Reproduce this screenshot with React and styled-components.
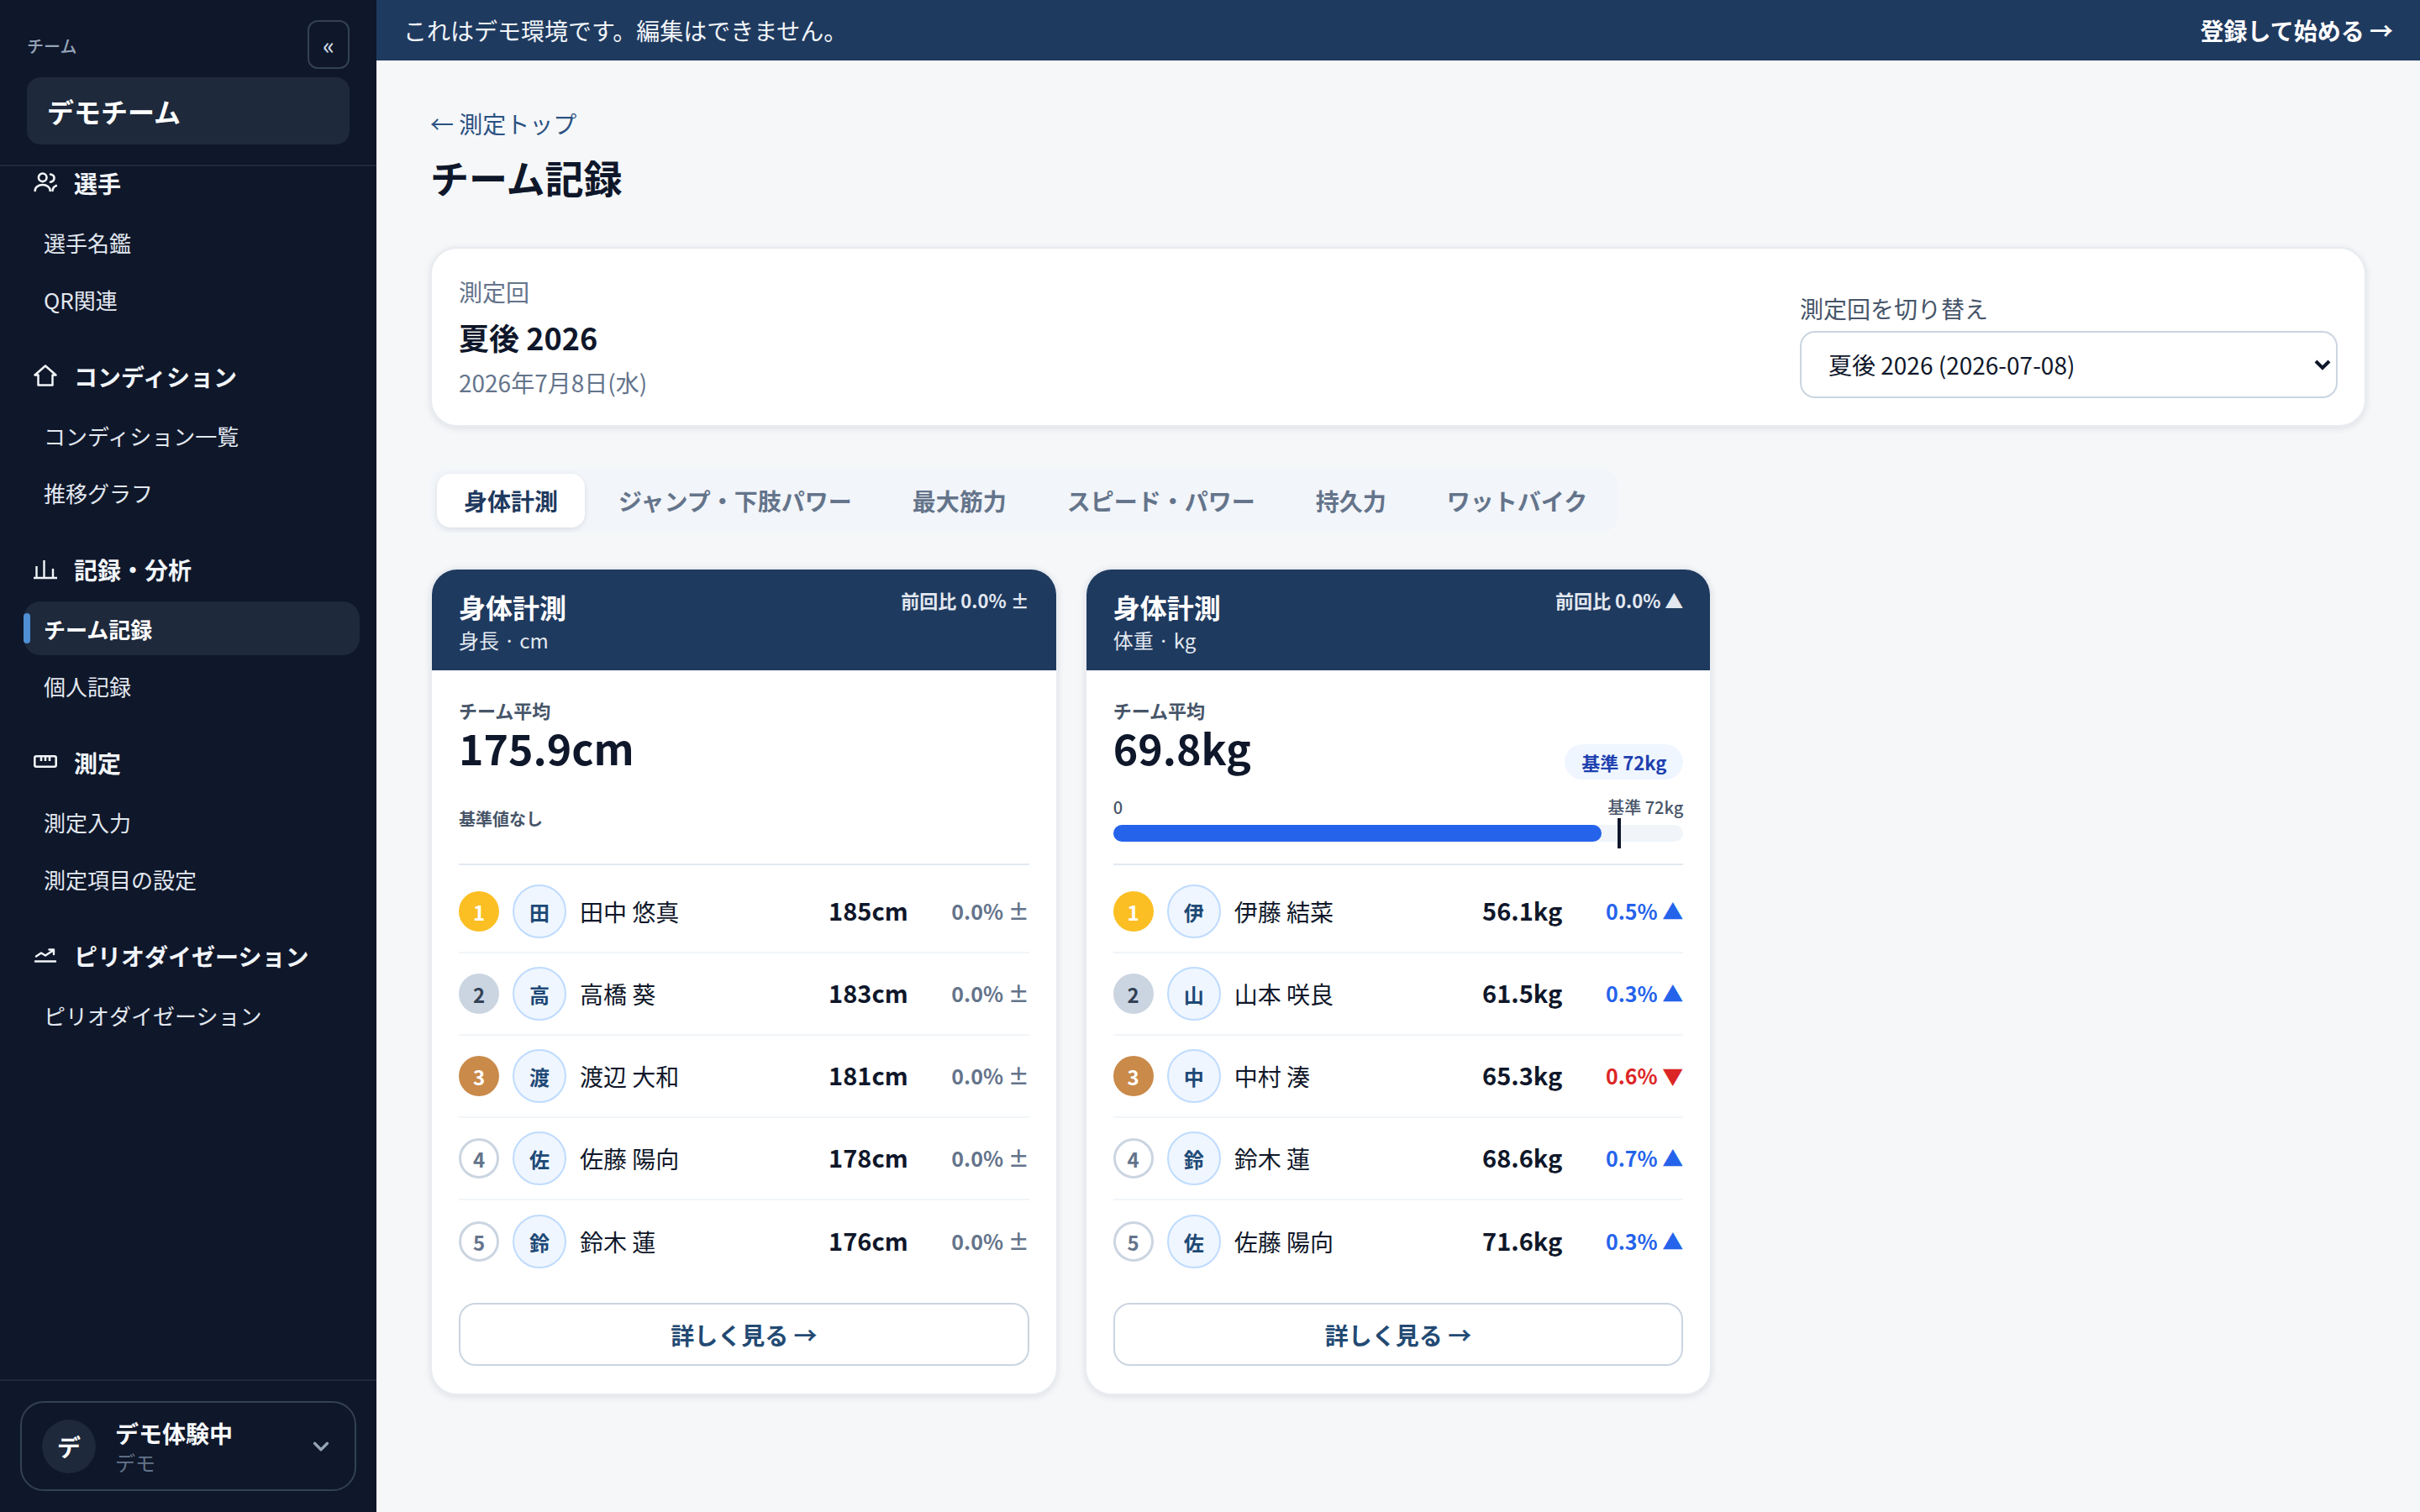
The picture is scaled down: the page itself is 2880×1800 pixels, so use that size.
import React from "react";
import styled, { createGlobalStyle } from "styled-components";
import { ChevronDown } from "lucide-react";

const GlobalStyle = createGlobalStyle`
  html, body { margin: 0; padding: 0; }
  body {
    background: #f5f7f9;
    color: #0f172a;
    font-family: "Noto Sans CJK JP", "Noto Sans", sans-serif;
  }
  * { box-sizing: border-box; }
`;

const Page = styled.div`
  display: flex;
  min-height: 1800px;
`;

const Sidebar = styled.aside`
  width: 448px;
  flex: none;
  display: flex;
  flex-direction: column;
  background: #0f172a;
`;

const SideTop = styled.div`
  padding: 24px 32px 24px;
  border-bottom: 2px solid #1e293b;
`;

const SideTopRow = styled.div`
  display: flex;
  justify-content: space-between;
  align-items: center;
  height: 58px;
  margin-bottom: 10px;
`;

const SideLabel = styled.span`
  font-size: 20px;
  font-weight: 500;
  color: #94a3b8;
  margin-top: 3px;
`;

const CollapseButton = styled.button`
  width: 50px;
  height: 58px;
  padding: 0;
  background: transparent;
  border: 2px solid #334155;
  border-radius: 12px;
  color: #cbd5e1;
  font: 500 28px "Noto Sans CJK JP", sans-serif;
`;

const TeamBox = styled.div`
  height: 80px;
  display: flex;
  align-items: center;
  padding: 0 24px;
  background: #1e293b;
  border-radius: 16px;
  color: #fff;
  font-size: 32px;
  font-weight: 700;
`;

const Nav = styled.nav`
  flex: 1;
  display: flex;
  flex-direction: column;
  gap: 40px;
  padding: 0 20px 0 28px;
`;

const NavGroup = styled.div`
  display: flex;
  flex-direction: column;
  gap: 4px;
`;

const NavHeading = styled.div`
  height: 40px;
  margin-bottom: 14px;
  padding-left: 12px;
  display: flex;
  align-items: center;
  gap: 20px;
  color: #f1f5f9;
  font-size: 28px;
  font-weight: 700;
`;

const NavItem = styled.div`
  position: relative;
  height: 64px;
  display: flex;
  align-items: center;
  padding-left: 24px;
  border-radius: 20px;
  font-size: 26px;
  font-weight: ${(p) => (p.$active ? 700 : 400)};
  color: ${(p) => (p.$active ? "#fff" : "#e2e8f0")};
  background: ${(p) => (p.$active ? "#1e293b" : "transparent")};
`;

const ActiveMark = styled.span`
  position: absolute;
  left: 0;
  top: 14px;
  bottom: 14px;
  width: 8px;
  border-radius: 4px;
  background: #4f8fd6;
`;

const SideFoot = styled.div`
  padding: 24px 24px 25px;
  border-top: 2px solid #1e293b;
`;

const AccountCard = styled.div`
  height: 107px;
  display: flex;
  align-items: center;
  padding: 0 25px 0 24px;
  border: 2px solid #334155;
  border-radius: 28px;
  gap: 23px;
`;

const AccountAvatar = styled.div`
  width: 64px;
  height: 64px;
  flex: none;
  border-radius: 50%;
  display: flex;
  align-items: center;
  justify-content: center;
  background: #1e293b;
  color: #fff;
  font-size: 28px;
  font-weight: 700;
`;

const AccountText = styled.div`
  flex: 1;
  display: flex;
  flex-direction: column;
`;

const AccountName = styled.span`
  color: #f8fafc;
  font-size: 28px;
  font-weight: 700;
  line-height: 37px;
`;

const AccountRole = styled.span`
  color: #64748b;
  font-size: 24px;
  line-height: 31px;
`;

const Column = styled.div`
  flex: 1;
  min-width: 0;
  display: flex;
  flex-direction: column;
`;

const TopBar = styled.div`
  height: 72px;
  display: flex;
  align-items: center;
  justify-content: space-between;
  padding: 0 32px;
  background: #1f3a5f;
  color: #f1f5f9;
  font-size: 28px;
`;

const TopLink = styled.span`
  color: #fff;
  font-weight: 600;
`;

const Main = styled.main`
  padding: 56px 64px;
`;

const BackLink = styled.div`
  font-size: 28px;
  line-height: 38px;
  color: #2c5282;
`;

const Title = styled.h1`
  margin: 13px 0 0;
  font-size: 46px;
  line-height: 62px;
  font-weight: 700;
  color: #0f172a;
`;

const SessionCard = styled.section`
  margin-top: 53px;
  height: 214px;
  display: flex;
  align-items: center;
  justify-content: space-between;
  padding: 0 32px;
  background: #fff;
  border: 2px solid #e8ecf1;
  border-radius: 32px;
  box-shadow: 0 2px 8px rgba(15, 23, 42, 0.1);
`;

const SessionInfo = styled.div`
  display: flex;
  flex-direction: column;
`;

const MutedLine = styled.span`
  font-size: 28px;
  line-height: 44px;
  color: #64748b;
`;

const SessionName = styled.span`
  font-size: 36px;
  line-height: 64px;
  font-weight: 700;
  color: #0f172a;
`;

const SelectArea = styled.div`
  width: 640px;
  margin-top: 20px;
  display: flex;
  flex-direction: column;
  gap: 8px;
`;

const SelectLabel = styled.label`
  font-size: 28px;
  line-height: 38px;
  color: #475569;
`;

const SelectWrap = styled.div`
  position: relative;
`;

const Select = styled.select`
  appearance: none;
  width: 100%;
  height: 80px;
  padding: 0 32px;
  background: #fff;
  border: 2px solid #cbd5e1;
  border-radius: 18px;
  color: #0f172a;
  font: 400 28px "Noto Sans CJK JP", sans-serif;
`;

const SelectArrow = styled.svg`
  position: absolute;
  right: 8px;
  top: 33px;
  width: 20px;
  height: 14px;
`;

const Tabs = styled.div`
  display: inline-flex;
  align-self: flex-start;
  gap: 8px;
  margin-top: 50px;
  padding: 6px 4px 6px 8px;
  background: #f2f5f9;
  border-radius: 20px;
`;

const Tab = styled.div`
  height: 64px;
  display: flex;
  align-items: center;
  padding: 0 32px;
  border-radius: 16px;
  font-size: 28px;
  font-weight: ${(p) => (p.$active ? 700 : 600)};
  color: ${(p) => (p.$active ? "#1f3a5f" : "#64748b")};
  background: ${(p) => (p.$active ? "#fff" : "transparent")};
  box-shadow: ${(p) => (p.$active ? "0 2px 6px rgba(15, 23, 42, 0.1)" : "none")};
`;

const CardGrid = styled.div`
  display: grid;
  grid-template-columns: repeat(3, 1fr);
  gap: 32px;
  margin-top: 42px;
`;

const Card = styled.article`
  background: #fff;
  border: 2px solid #e8ecf1;
  border-radius: 32px;
  overflow: hidden;
  box-shadow: 0 2px 8px rgba(15, 23, 42, 0.1);
`;

const CardHead = styled.header`
  height: 120px;
  display: flex;
  justify-content: space-between;
  padding: 22px 32px 0;
  background: #1f3a5f;
  color: #fff;
`;

const CardTitle = styled.div`
  font-size: 32px;
  line-height: 44px;
  font-weight: 700;
`;

const CardSub = styled.div`
  font-size: 24px;
  line-height: 36px;
  color: #e2e8f0;
`;

const HeadDelta = styled.div`
  margin-top: -2px;
  font-size: 22px;
  font-weight: 600;
  line-height: 32px;
  color: #e2e8f0;
`;

const CardBody = styled.div`
  padding: 30px 32px 33px;
`;

const Summary = styled.div`
  height: 202px;
  border-bottom: 2px solid #e2e8f0;
`;

const AvgLabel = styled.div`
  font-size: 22px;
  font-weight: 600;
  line-height: 34px;
  color: #475569;
`;

const AvgRow = styled.div`
  display: flex;
  justify-content: space-between;
  align-items: flex-end;
  height: 60px;
`;

const AvgValue = styled.div`
  margin-bottom: 6px;
  font-size: 50px;
  line-height: 54px;
  font-weight: 700;
  color: #0f172a;
`;

const Pill = styled.span`
  height: 42px;
  display: inline-flex;
  align-items: center;
  padding: 0 20px;
  margin-bottom: -6px;
  border-radius: 21px;
  background: #eff6ff;
  color: #1e40af;
  font-size: 22px;
  font-weight: 600;
`;

const NoBaseline = styled.div`
  margin-top: 38px;
  font-size: 20px;
  font-weight: 600;
  line-height: 30px;
  color: #475569;
`;

const BarLabels = styled.div`
  display: flex;
  justify-content: space-between;
  margin-top: 24px;
  font-size: 20px;
  font-weight: 500;
  line-height: 30px;
  color: #475569;
`;

const BarTrack = styled.div`
  position: relative;
  height: 20px;
  margin-top: 6px;
  border-radius: 10px;
  background: #f1f5f9;
`;

const BarFill = styled.div`
  height: 100%;
  border-radius: 10px;
  background: #2563eb;
`;

const BarMarker = styled.span`
  position: absolute;
  top: -8px;
  bottom: -8px;
  width: 4px;
  background: #0f172a;
`;

const Rows = styled.div`
  margin-top: 7px;
`;

const Row = styled.div`
  height: 98px;
  display: flex;
  align-items: center;
  border-bottom: ${(p) => (p.$last ? "none" : "2px solid #f1f5f9")};
`;

const rankStyles = {
  1: "background:#fbbf24;color:#fff;",
  2: "background:#cbd5e1;color:#334155;",
  3: "background:#c98a4a;color:#fff;",
  4: "background:#fff;color:#64748b;border:3px solid #cbd5e1;",
  5: "background:#fff;color:#64748b;border:3px solid #cbd5e1;",
};

const Rank = styled.span`
  width: 48px;
  height: 48px;
  flex: none;
  display: flex;
  align-items: center;
  justify-content: center;
  border-radius: 50%;
  font-size: 24px;
  font-weight: 600;
  ${(p) => rankStyles[p.$rank]}
`;

const Avatar = styled.span`
  width: 64px;
  height: 64px;
  flex: none;
  margin-left: 16px;
  display: flex;
  align-items: center;
  justify-content: center;
  border-radius: 50%;
  background: #eff6ff;
  border: 2px solid #bfdbfe;
  color: #1e4976;
  font-size: 24px;
  font-weight: 700;
`;

const Name = styled.span`
  flex: 1;
  margin-left: 16px;
  font-size: 28px;
  color: #0f172a;
`;

const Value = styled.span`
  font-size: 29px;
  font-weight: 700;
  color: #0f172a;
  margin-top: -4px;
`;

const deltaColors = { flat: "#64748b", up: "#2563eb", down: "#dc2626" };

const Delta = styled.span`
  width: 144px;
  margin-top: -2px;
  text-align: right;
  font-size: 25px;
  font-weight: 600;
  color: ${(p) => deltaColors[p.$dir]};
`;

const DetailButton = styled.button`
  display: block;
  width: 100%;
  height: 75px;
  margin-top: 24px;
  background: #fff;
  border: 2px solid #cbd5e1;
  border-radius: 20px;
  color: #234a73;
  font: 600 28px "Noto Sans CJK JP", sans-serif;
`;

const PlayersIcon = () => (
  <svg width="28" height="28" viewBox="0 0 28 28" fill="none" stroke="currentColor" strokeWidth="2.6" strokeLinecap="round">
    <circle cx="10.7" cy="7.3" r="4.8" />
    <path d="M1.7 23c0-4 4-7 9-7s9 3 9 7" />
    <path d="M20 3.5c3 .5 4.5 2.5 4.5 4.5s-1.5 4.2-4.5 4.7" />
    <path d="M22.5 23c.2-2.6 1.800-5 4.500-6" />
  </svg>
);

const HouseIcon = () => (
  <svg width="28" height="28" viewBox="0 0 28 28" fill="none" stroke="currentColor" strokeWidth="2.5" strokeLinejoin="round">
    <path d="M14 1.500 1.500 12.500h4v12h17v-12h4Z" />
  </svg>
);

const BarsIcon = () => (
  <svg width="28" height="28" viewBox="0 0 28 28" fill="none" stroke="currentColor" strokeWidth="2.4">
    <path d="M0 24h28M3.500 24V10M12.500 24V3M23 24V13" />
  </svg>
);

const RulerIcon = () => (
  <svg width="28" height="28" viewBox="0 0 28 28" fill="none" stroke="currentColor" strokeWidth="2.6" strokeLinejoin="round">
    <rect x="1.300" y="6.300" width="25.400" height="12.400" rx="2" />
    <path d="M9 6.300v5.700M14 6.300v5.700M19 6.300v5.700" />
  </svg>
);

const TrendIcon = () => (
  <svg width="28" height="28" viewBox="0 0 28 28" fill="none" stroke="currentColor" strokeWidth="2.4" strokeLinecap="round" strokeLinejoin="round">
    <path d="M2 20.500h24M3 14.500l6-4 5 3 10-6.500M18.500 6.500H24V12" />
  </svg>
);

const navGroups = [
  { label: "選手", icon: <PlayersIcon />, items: ["選手名鑑", "QR関連"] },
  { label: "コンディション", icon: <HouseIcon />, items: ["コンディション一覧", "推移グラフ"] },
  { label: "記録・分析", icon: <BarsIcon />, items: ["チーム記録", "個人記録"] },
  { label: "測定", icon: <RulerIcon />, items: ["測定入力", "測定項目の設定"] },
  { label: "ピリオダイゼーション", icon: <TrendIcon />, items: ["ピリオダイゼーション"] },
];

const heightRows = [
  { name: "田中 悠真", short: "田", value: "185cm", delta: "0.0% ±", dir: "flat" },
  { name: "高橋 葵", short: "高", value: "183cm", delta: "0.0% ±", dir: "flat" },
  { name: "渡辺 大和", short: "渡", value: "181cm", delta: "0.0% ±", dir: "flat" },
  { name: "佐藤 陽向", short: "佐", value: "178cm", delta: "0.0% ±", dir: "flat" },
  { name: "鈴木 蓮", short: "鈴", value: "176cm", delta: "0.0% ±", dir: "flat" },
];

const weightRows = [
  { name: "伊藤 結菜", short: "伊", value: "56.1kg", delta: "0.5% ▲", dir: "up" },
  { name: "山本 咲良", short: "山", value: "61.5kg", delta: "0.3% ▲", dir: "up" },
  { name: "中村 湊", short: "中", value: "65.3kg", delta: "0.6% ▼", dir: "down" },
  { name: "鈴木 蓮", short: "鈴", value: "68.6kg", delta: "0.7% ▲", dir: "up" },
  { name: "佐藤 陽向", short: "佐", value: "71.6kg", delta: "0.3% ▲", dir: "up" },
];

const tabs = ["身体計測", "ジャンプ・下肢パワー", "最大筋力", "スピード・パワー", "持久力", "ワットバイク"];

const RecordCard = ({ sub, delta, avg, baseline, rows }) => (
  <Card>
    <CardHead>
      <div>
        <CardTitle>身体計測</CardTitle>
        <CardSub>{sub}</CardSub>
      </div>
      <HeadDelta>{delta}</HeadDelta>
    </CardHead>
    <CardBody>
      <Summary>
        <AvgLabel>チーム平均</AvgLabel>
        <AvgRow>
          <AvgValue>{avg}</AvgValue>
          {baseline && <Pill>{baseline}</Pill>}
        </AvgRow>
        {baseline ? (
          <>
            <BarLabels>
              <span>0</span>
              <span>{baseline}</span>
            </BarLabels>
            <BarTrack>
              <BarFill style={{ width: "85.6%" }} />
              <BarMarker style={{ left: "88.4%" }} />
            </BarTrack>
          </>
        ) : (
          <NoBaseline>基準値なし</NoBaseline>
        )}
      </Summary>
      <Rows>
        {rows.map((r, i) => (
          <Row key={r.name} $last={i === rows.length - 1}>
            <Rank $rank={i + 1}>{i + 1}</Rank>
            <Avatar>{r.short}</Avatar>
            <Name>{r.name}</Name>
            <Value>{r.value}</Value>
            <Delta $dir={r.dir}>{r.delta}</Delta>
          </Row>
        ))}
      </Rows>
      <DetailButton>詳しく見る →</DetailButton>
    </CardBody>
  </Card>
);

export default function App() {
  return (
    <>
      <GlobalStyle />
      <Page>
        <Sidebar>
          <SideTop>
            <SideTopRow>
              <SideLabel>チーム</SideLabel>
              <CollapseButton>«</CollapseButton>
            </SideTopRow>
            <TeamBox>デモチーム</TeamBox>
          </SideTop>
          <Nav>
            {navGroups.map((g) => (
              <NavGroup key={g.label}>
                <NavHeading>
                  {g.icon}
                  {g.label}
                </NavHeading>
                {g.items.map((item) => (
                  <NavItem key={item} $active={item === "チーム記録"}>
                    {item === "チーム記録" && <ActiveMark />}
                    {item}
                  </NavItem>
                ))}
              </NavGroup>
            ))}
          </Nav>
          <SideFoot>
            <AccountCard>
              <AccountAvatar>デ</AccountAvatar>
              <AccountText>
                <AccountName>デモ体験中</AccountName>
                <AccountRole>デモ</AccountRole>
              </AccountText>
              <ChevronDown size={30} color="#94a3b8" strokeWidth={2.6} />
            </AccountCard>
          </SideFoot>
        </Sidebar>
        <Column>
          <TopBar>
            <span>これはデモ環境です。編集はできません。</span>
            <TopLink>登録して始める →</TopLink>
          </TopBar>
          <Main>
            <BackLink>← 測定トップ</BackLink>
            <Title>チーム記録</Title>
            <SessionCard>
              <SessionInfo>
                <MutedLine>測定回</MutedLine>
                <SessionName>夏後 2026</SessionName>
                <MutedLine>2026年7月8日(水)</MutedLine>
              </SessionInfo>
              <SelectArea>
                <SelectLabel>測定回を切り替え</SelectLabel>
                <SelectWrap>
                  <Select defaultValue="a">
                    <option value="a">夏後 2026 (2026-07-08)</option>
                  </Select>
                  <SelectArrow viewBox="0 0 20 14" fill="none" stroke="#0f172a" strokeWidth="4">
                    <path d="M2 3l8 8 8-8" />
                  </SelectArrow>
                </SelectWrap>
              </SelectArea>
            </SessionCard>
            <Tabs>
              {tabs.map((t, i) => (
                <Tab key={t} $active={i === 0}>
                  {t}
                </Tab>
              ))}
            </Tabs>
            <CardGrid>
              <RecordCard sub="身長 · cm" delta="前回比 0.0% ±" avg="175.9cm" rows={heightRows} />
              <RecordCard sub="体重 · kg" delta="前回比 0.0% ▲" avg="69.8kg" baseline="基準 72kg" rows={weightRows} />
            </CardGrid>
          </Main>
        </Column>
      </Page>
    </>
  );
}
